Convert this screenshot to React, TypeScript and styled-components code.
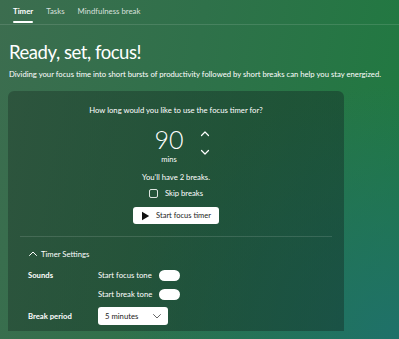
import { useState } from 'react';
import styled, { createGlobalStyle } from 'styled-components';

const GlobalStyle = createGlobalStyle`
  html, body {
    margin: 0;
    padding: 0;
    height: 100%;
  }
  body {
    font-family: Lato, 'Noto Sans', sans-serif;
    color: #ffffff;
    background: #2f6f48;
  }
  * {
    box-sizing: border-box;
  }
`;

const Page = styled.div`
  width: 399px;
  height: 339px;
  overflow: hidden;
  background:
    radial-gradient(ellipse 70% 75% at 100% 100%, rgba(31, 112, 108, 0.95), rgba(31, 112, 108, 0) 100%),
    linear-gradient(100deg, #3c6d4f 0%, #2f714a 45%, #1f7a40 100%);
`;

const TabBar = styled.nav`
  display: flex;
  gap: 13px;
  height: 25px;
  padding: 0 13px;
  border-bottom: 1px solid rgba(255, 255, 255, 0.12);
`;

const Tab = styled.div<{ $active?: boolean }>`
  position: relative;
  padding-top: 6px;
  font-size: 7.8px;
  line-height: 11px;
  font-weight: ${p => (p.$active ? 700 : 400)};
  color: ${p => (p.$active ? '#ffffff' : 'rgba(255, 255, 255, 0.8)')};

  &::after {
    content: '';
    display: ${p => (p.$active ? 'block' : 'none')};
    position: absolute;
    left: 0;
    right: 0;
    top: 21px;
    height: 2px;
    border-radius: 1px;
    background: #ffffff;
  }
`;

const Main = styled.main`
  padding: 0 8px;
`;

const Title = styled.h1`
  margin: 13px 0 0 1px;
  font-size: 18.5px;
  line-height: 28px;
  font-weight: 400;
  letter-spacing: -0.45px;
`;

const Lead = styled.p`
  margin: 2px 0 0 1px;
  font-size: 7.7px;
  line-height: 12px;
  font-weight: 400;
  color: #ffffff;
  white-space: nowrap;
`;

const Card = styled.section`
  margin-top: 11px;
  width: 336px;
  height: 240px;
  border-radius: 6px 6px 0 0;
  background: linear-gradient(100deg, rgba(27, 50, 38, 0.42) 0%, rgba(22, 52, 40, 0.5) 60%, rgba(20, 50, 42, 0.5) 100%);
  padding: 13px 12px 0;
  display: flex;
  flex-direction: column;
  align-items: center;
`;

const SmallText = styled.div`
  font-size: 7.7px;
  line-height: 12px;
`;

const Duration = styled.div`
  margin-top: 9px;
  display: flex;
  align-items: center;
  gap: 16px;
  padding-left: 12px;
`;

const Value = styled.div`
  display: flex;
  flex-direction: column;
  align-items: center;
`;

const Number = styled.div`
  font-size: 25px;
  line-height: 28px;
  font-weight: 300;
`;

const Unit = styled.div`
  font-size: 7.5px;
  line-height: 9px;
  margin-top: 2px;
`;

const Spinner = styled.div`
  display: flex;
  flex-direction: column;
  gap: 10px;
  margin-top: -3px;
`;

const Chevron = styled.svg`
  display: block;
  width: 10px;
  height: 8px;
`;

const Breaks = styled(SmallText)`
  margin-top: 7px;
`;

const CheckRow = styled.label`
  margin-top: 4px;
  display: flex;
  align-items: center;
  gap: 7px;
  font-size: 7.7px;
  line-height: 12px;
`;

const Box = styled.span`
  width: 9px;
  height: 9px;
  border: 1px solid rgba(255, 255, 255, 0.85);
  border-radius: 2px;
`;

const StartButton = styled.button`
  margin-top: 8px;
  display: flex;
  align-items: center;
  gap: 6px;
  height: 17px;
  padding: 0 8px 0 8px;
  background: #ffffff;
  border: none;
  border-radius: 3px;
  color: #1b1b1b;
  font-family: inherit;
  font-size: 7.5px;
`;

const Divider = styled.hr`
  align-self: stretch;
  margin: 12px 0 0;
  border: none;
  border-top: 1px solid rgba(255, 255, 255, 0.13);
`;

const Settings = styled.div`
  align-self: stretch;
  padding-left: 8px;
  display: flex;
  flex-direction: column;
`;

const SettingsHeader = styled.div`
  margin-top: 11px;
  display: flex;
  align-items: center;
  gap: 3px;
  font-size: 7.7px;
  line-height: 12px;
`;

const SettingRow = styled.div<{ $top: number }>`
  margin-top: ${p => p.$top}px;
  display: grid;
  grid-template-columns: 63px auto auto;
  justify-content: start;
  align-items: center;
  column-gap: 7px;
  font-size: 7.7px;
  line-height: 12px;
`;

const Label = styled.span`
  font-weight: 700;
`;

const Toggle = styled.span`
  width: 21px;
  height: 11px;
  border-radius: 6px;
  background: #ffffff;
`;

const Select = styled.div`
  display: flex;
  align-items: center;
  justify-content: space-between;
  width: 70px;
  height: 18px;
  padding: 0 6px 0 7px;
  background: #ffffff;
  border-radius: 3px;
  color: #1b1b1b;
  font-size: 7.7px;
`;

function ChevronIcon({ up, color = '#ffffff', width = 1.2 }: { up?: boolean; color?: string; width?: number }) {
  return (
    <Chevron viewBox="0 0 10 8">
      <path
        d={up ? 'M1.5 5.5 L5 2 L8.5 5.5' : 'M1.5 2.5 L5 6 L8.5 2.5'}
        fill="none"
        stroke={color}
        strokeWidth={width}
        strokeLinecap="round"
        strokeLinejoin="round"
      />
    </Chevron>
  );
}

export default function App() {
  const [minutes, setMinutes] = useState(90);

  return (
    <>
      <GlobalStyle />
      <Page>
        <TabBar>
          <Tab $active>Timer</Tab>
          <Tab>Tasks</Tab>
          <Tab>Mindfulness break</Tab>
        </TabBar>
        <Main>
          <Title>Ready, set, focus!</Title>
          <Lead>
            Dividing your focus time into short bursts of productivity followed by short breaks can help you stay energized.
          </Lead>
          <Card>
            <SmallText>How long would you like to use the focus timer for?</SmallText>
            <Duration>
              <Value>
                <Number>{minutes}</Number>
                <Unit>mins</Unit>
              </Value>
              <Spinner>
                <span onClick={() => setMinutes(m => m + 5)}>
                  <ChevronIcon up />
                </span>
                <span onClick={() => setMinutes(m => Math.max(5, m - 5))}>
                  <ChevronIcon />
                </span>
              </Spinner>
            </Duration>
            <Breaks>You'll have 2 breaks.</Breaks>
            <CheckRow>
              <Box />
              Skip breaks
            </CheckRow>
            <StartButton>
              <svg width="9" height="10" viewBox="0 0 9 10">
                <path d="M1 0.8 L8.2 5 L1 9.2 Z" fill="#111111" />
              </svg>
              Start focus timer
            </StartButton>
            <Divider />
            <Settings>
              <SettingsHeader>
                <ChevronIcon up width={1} />
                Timer Settings
              </SettingsHeader>
              <SettingRow $top={9}>
                <Label>Sounds</Label>
                <span>Start focus tone</span>
                <Toggle />
              </SettingRow>
              <SettingRow $top={7}>
                <span />
                <span>Start break tone</span>
                <Toggle />
              </SettingRow>
              <SettingRow $top={7}>
                <Label>Break period</Label>
                <Select>
                  5 minutes
                  <ChevronIcon color="#555555" width={0.9} />
                </Select>
              </SettingRow>
            </Settings>
          </Card>
        </Main>
      </Page>
    </>
  );
}
